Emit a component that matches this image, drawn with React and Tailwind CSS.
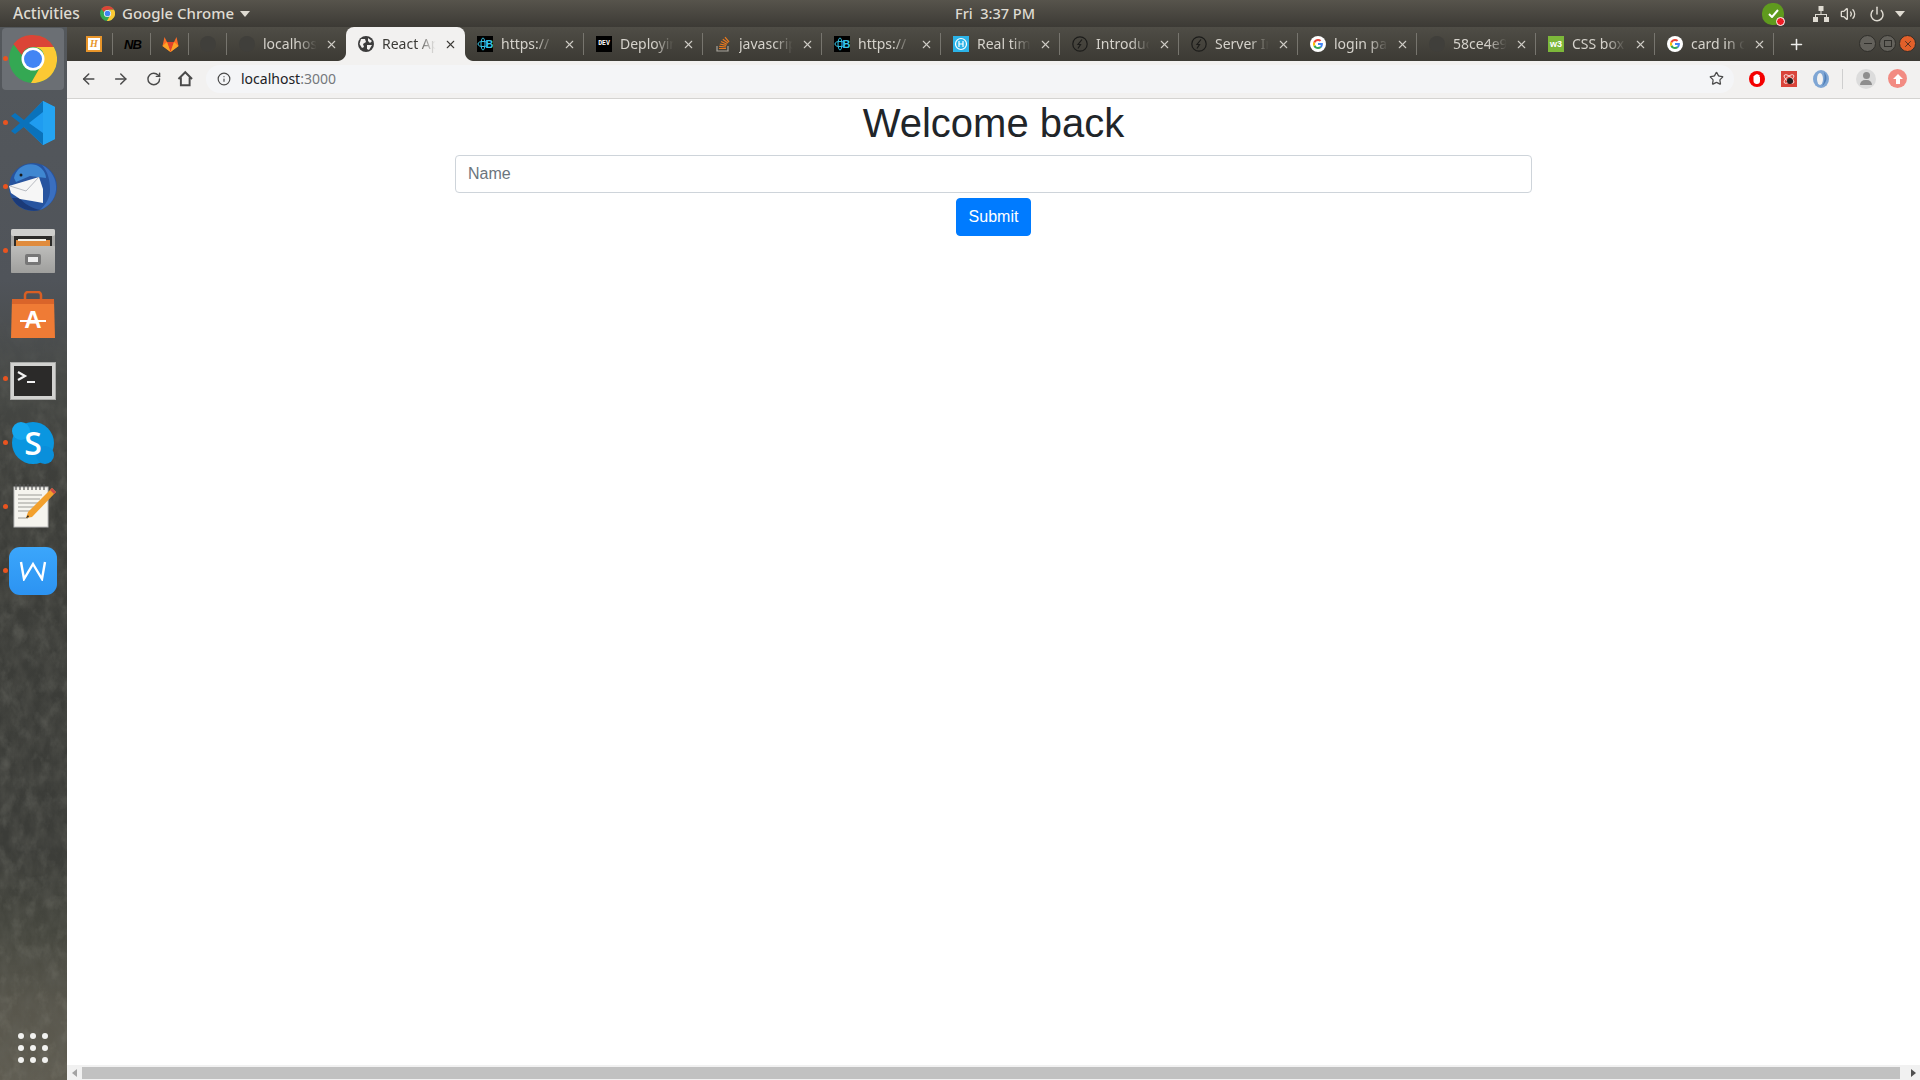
import { ArrowLeft, ArrowRight, RotateCw, Info, Star, X, Plus, Volume2, Power } from 'lucide-react';

const SANS = 'font-["Noto_Sans",sans-serif]';

function ChromeIcon({ size = 48 }) {
  return (
    <svg width={size} height={size} viewBox="0 0 48 48">
      <circle cx="24" cy="24" r="24" fill="#34a853" />
      <path d="M24 0a24 24 0 0 1 20.8 12H24a12 12 0 0 0-11.3 7.9L4.4 8.9A24 24 0 0 1 24 0z" fill="#db4437" />
      <path d="M44.8 12A24 24 0 0 1 22 48l10.4-17.9A12 12 0 0 0 33 15.5 12 12 0 0 0 24 12z" fill="#fcc934" />
      <circle cx="24" cy="24" r="11.5" fill="#fff" />
      <circle cx="24" cy="24" r="9" fill="#4285f4" />
    </svg>
  );
}

function VsCodeIcon() {
  return (
    <svg width="46" height="46" viewBox="0 0 46 46">
      <path d="M33 1 L45 7 V39 L33 45 L11 24 Z" fill="#1f9cf0" />
      <path d="M33 1 L14 20 L5 13 L1 16 L10 23 L1 31 L5 34 L14 27 L33 45 L33 33 L19 23 L33 12 Z" fill="#0a72bb" />
      <path d="M33 1 L45 7 V39 L33 45 Z" fill="#24a4f2" />
    </svg>
  );
}

function ThunderbirdIcon() {
  return (
    <svg width="50" height="50" viewBox="0 0 50 50">
      <circle cx="25" cy="25" r="24" fill="#27549f" />
      <path d="M4 36 C10 48 24 50 32 48 C24 46 16 42 12 36 Z" fill="#1b3a78" />
      <path d="M34 3 C44 8 49 18 48 28 C47 38 40 45 32 48 C38 42 42 36 42 28 C42 18 40 10 34 3 Z" fill="#3a6fc0" />
      <path d="M6 16 C8 6 18 0 28 3 C34 5 38 11 38 16 L22 14 L8 20 Z" fill="#3f87d1" />
      <circle cx="13" cy="13" r="1.500" fill="#1a1a1a" />
      <path d="M1 24 L31 15 L35 27 L35 41 L24 39 L12 37 L3 31 Z" fill="#f6f6f6" />
      <path d="M2 24 L18 29 L31 15" fill="none" stroke="#b9bcc2" strokeWidth="1" />
    </svg>
  );
}

function FilesIcon() {
  return (
    <svg width="46" height="46" viewBox="0 0 46 46">
      <defs>
        <linearGradient id="files-front" x1="0" y1="0" x2="0" y2="1">
          <stop offset="0" stopColor="#bdbdbb" />
          <stop offset="1" stopColor="#9f9f9d" />
        </linearGradient>
      </defs>
      <rect x="1" y="1" width="44" height="44" rx="2" fill="#a8a8a6" />
      <rect x="1" y="1" width="44" height="7" rx="2" fill="#cfcfcd" />
      <rect x="4" y="8" width="38" height="11" fill="#2c2b29" />
      <rect x="6" y="12" width="34" height="8" fill="#e08b3c" />
      <rect x="8" y="11" width="28" height="2" fill="#f2efe6" />
      <rect x="1" y="18" width="44" height="27" rx="1" fill="url(#files-front)" />
      <rect x="15" y="26" width="16" height="11" rx="2" fill="#777" />
      <rect x="18" y="29" width="10" height="5" fill="#eee" />
    </svg>
  );
}

function StoreIcon() {
  return (
    <svg width="44" height="48" viewBox="0 0 44 48">
      <path d="M14 10 V4 a3 3 0 0 1 3-3 h10 a3 3 0 0 1 3 3 V10" fill="none" stroke="#d95f24" strokeWidth="2.500" />
      <path d="M1 8 H43 L44 47 H0 Z" fill="#ef7b35" />
      <path d="M1 8 H43 V13 H1 Z" fill="#d9642a" />
      <text x="22" y="37" textAnchor="middle" fontSize="24" fontWeight="700" fill="#fff" fontFamily="Liberation Sans, sans-serif">A</text>
      <rect x="9" y="29" width="26" height="2" fill="#fff" />
    </svg>
  );
}

function TerminalIcon() {
  return (
    <svg width="46" height="38" viewBox="0 0 46 38">
      <rect x="0.500" y="0.500" width="45" height="37" fill="#d2d2d0" stroke="#a9a9a7" />
      <rect x="4" y="4" width="38" height="30" fill="#2b2a29" />
      <path d="M8 10 L15 14 L8 18" fill="none" stroke="#f2f2f2" strokeWidth="2.200" />
      <rect x="17" y="19" width="8" height="2" fill="#f2f2f2" />
    </svg>
  );
}

function SkypeIcon() {
  return (
    <div className='relative flex items-center justify-center w-[42px] h-[42px] rounded-[21px] bg-[#0a96e0] text-white font-["Open_Sans",sans-serif] font-semibold text-[32px] leading-none'>
      <div className="absolute left-0 top-0 w-[18px] h-[18px] rounded-full bg-[#14a6ee]" />
      <div className="absolute right-0 bottom-0 w-[18px] h-[18px] rounded-full bg-[#0a8fdb]" />
      <span className="relative">S</span>
    </div>
  );
}

function GeditIcon() {
  return (
    <svg width="46" height="46" viewBox="0 0 46 46">
      <rect x="2" y="5" width="34" height="40" fill="#f5f4ee" stroke="#bbb" strokeWidth="1" />
      <path d="M4 2v6M8 2v6M12 2v6M16 2v6M20 2v6M24 2v6M28 2v6M32 2v6" stroke="#555" strokeWidth="1.200" />
      <path d="M6 13h24M6 17h22M6 21h25M6 25h18M6 29h14M6 36h10" stroke="#9b9b96" strokeWidth="1" />
      <path d="M40 6 L44 10 L20 35 L14 36 L16 30 Z" fill="#f2a02c" />
      <path d="M40 6 L44 10 L42 12 L38 8 Z" fill="#cf4a4a" />
      <path d="M14 36 L16 33 L17 35 Z" fill="#222" />
    </svg>
  );
}

function WpsIcon() {
  return (
    <div className="flex items-center justify-center w-12 h-12 rounded-[11px] bg-gradient-to-b from-[#3ba6fb] to-[#2c93f2]">
      <svg width="28" height="20" viewBox="0 0 28 20">
        <path d="M2 1 L5 18 L14 3 L23 18 L26 1" fill="none" stroke="#fff" strokeWidth="2.400" />
      </svg>
    </div>
  );
}

const DOCK = [
  { key: 'chrome', icon: <ChromeIcon />, active: true, dot: true },
  { key: 'code', icon: <VsCodeIcon />, dot: true },
  { key: 'thunderbird', icon: <ThunderbirdIcon />, dot: true },
  { key: 'files', icon: <FilesIcon />, dot: true },
  { key: 'store', icon: <StoreIcon /> },
  { key: 'terminal', icon: <TerminalIcon />, dot: true, shift: 'mt-[4px]' },
  { key: 'skype', icon: <SkypeIcon />, dot: true },
  { key: 'gedit', icon: <GeditIcon />, dot: true, shift: 'mb-[4px] ml-[4px]' },
  { key: 'wps', icon: <WpsIcon />, dot: true },
];

function DarkGlobe() {
  return <div className="w-4 h-4 rounded-full bg-[#403f3b]" />;
}

function WhiteGlobe() {
  return (
    <svg width="16" height="16" viewBox="0 0 16 16">
      <circle cx="8" cy="8" r="8" fill="#3c3c3c" />
      <path d="M3 3 L7 3 L8 6 L5 8 L6 11 L4 12 L1.500 8 Z M10 2 L14 5 L12 7 L10 5 Z M9 9 L14 9 L11 14 L9 13 Z" fill="#f2f1f0" />
    </svg>
  );
}

function AtomIcon() {
  return (
    <svg width="16" height="16" viewBox="0 0 16 16">
      <rect width="16" height="16" fill="#000" />
      <g fill="none" stroke="#35c6e8" strokeWidth="1">
        <ellipse cx="6" cy="8" rx="2" ry="6" />
        <ellipse cx="6" cy="8" rx="5" ry="2.500" />
      </g>
      <text x="8.500" y="12" fontSize="11" fontWeight="700" fill="#35c6e8" fontFamily="Liberation Sans, sans-serif">B</text>
    </svg>
  );
}

function DevIcon() {
  return (
    <div className='flex items-center justify-center w-4 h-4 bg-black text-white text-[6.500px] font-bold leading-none font-["Liberation_Mono",monospace]'>
      DEV
    </div>
  );
}

function StackIcon() {
  return (
    <svg width="16" height="16" viewBox="0 0 16 16" fill="none">
      <path d="M2 10 V15 H13 V10" stroke="#a8a49c" strokeWidth="1.200" />
      <path d="M4 12.500 H11 M4.200 10.300 L11 11 M4.800 8 L11.300 9.400 M6 5.500 L12 8.200 M7.800 3.200 L13 7 M10 1.200 L14 6" stroke="#e8791f" strokeWidth="1.200" />
    </svg>
  );
}

function HashIcon() {
  return (
    <svg width="16" height="16" viewBox="0 0 16 16">
      <rect width="16" height="16" fill="#2bb3e8" />
      <circle cx="8" cy="8" r="5.500" fill="none" stroke="#fff" strokeWidth="1.200" />
      <path d="M6 5 V11 M10 5 V11 M6 8 H10" stroke="#fff" strokeWidth="1.200" />
    </svg>
  );
}

function BoltIcon() {
  return (
    <svg width="16" height="16" viewBox="0 0 16 16" fill="none">
      <circle cx="8" cy="8" r="7.200" stroke="#1c1c1a" strokeWidth="1.200" />
      <path d="M10 3.500 L6 8.500 H8.500 L6 12.500" stroke="#1c1c1a" strokeWidth="1.200" />
    </svg>
  );
}

function GoogleIcon() {
  return (
    <svg width="16" height="16" viewBox="0 0 16 16">
      <circle cx="8" cy="8" r="8" fill="#fff" />
      <path d="M12.900 8.100c0-.4 0-.7-.1-1H8v1.900h2.800c-.1.7-.5 1.200-1 1.600l1.600 1.200c.9-.9 1.500-2.200 1.500-3.700z" fill="#4285f4" />
      <path d="M8 13c1.300 0 2.500-.4 3.400-1.200L9.800 10.600c-.5.3-1.100.5-1.800.5-1.300 0-2.400-.9-2.800-2.100L3.500 10.200C4.300 11.900 6 13 8 13z" fill="#34a853" />
      <path d="M5.200 9c-.2-.6-.2-1.300 0-1.900L3.500 5.800c-.7 1.400-.7 3 0 4.400z" fill="#fbbc05" />
      <path d="M8 4.900c.7 0 1.400.3 1.900.7l1.400-1.400C10.400 3.400 9.300 3 8 3 6 3 4.300 4.100 3.500 5.800l1.700 1.300C5.600 5.800 6.700 4.900 8 4.900z" fill="#ea4335" />
    </svg>
  );
}

function W3Icon() {
  return (
    <div className='flex items-center justify-center w-4 h-4 bg-[#7db83a] text-white text-[9px] font-bold leading-none font-["Liberation_Sans",sans-serif]'>
      w3
    </div>
  );
}

function HIcon() {
  return (
    <div className='flex items-center justify-center w-4 h-4 bg-white border-2 border-[#e8952a] text-[#e8952a] text-[10px] font-bold italic leading-none font-["Liberation_Serif",serif]'>
      H
    </div>
  );
}

function NbIcon() {
  return <div className='w-4 text-center text-black text-[13px] font-bold italic leading-none tracking-[-1px] font-["Liberation_Sans",sans-serif]'>NB</div>;
}

function GitlabIcon() {
  return (
    <svg width="17" height="16" viewBox="0 0 17 16">
      <path d="M8.500 16 L0.500 10 L2.500 1 L5 6 H12 L14.500 1 L16.500 10 Z" fill="#fc6d26" />
      <path d="M8.500 16 L5 6 H12 Z" fill="#e24329" />
      <path d="M0.500 10 L5 6 L8.500 16 Z M16.500 10 L12 6 L8.500 16 Z" fill="#fca326" />
    </svg>
  );
}

const PINNED = [
  { key: 'h', icon: <HIcon /> },
  { key: 'nb', icon: <NbIcon /> },
  { key: 'gitlab', icon: <GitlabIcon /> },
  { key: 'globe', icon: <DarkGlobe /> },
];

const TABS = [
  { id: 1, title: 'localhost', icon: <DarkGlobe />, noSep: true },
  { id: 2, title: 'React App', icon: <WhiteGlobe />, active: true },
  { id: 3, title: 'https://', icon: <AtomIcon /> },
  { id: 4, title: 'Deploying', icon: <DevIcon /> },
  { id: 5, title: 'javascript', icon: <StackIcon /> },
  { id: 6, title: 'https://', icon: <AtomIcon /> },
  { id: 7, title: 'Real time', icon: <HashIcon /> },
  { id: 8, title: 'Introducing', icon: <BoltIcon /> },
  { id: 9, title: 'Server In', icon: <BoltIcon /> },
  { id: 10, title: 'login page', icon: <GoogleIcon /> },
  { id: 11, title: '58ce4e9f', icon: <DarkGlobe /> },
  { id: 12, title: 'CSS box', icon: <W3Icon /> },
  { id: 13, title: 'card in css', icon: <GoogleIcon /> },
];

function Tab({ tab }) {
  return (
    <div
      className={`relative flex items-center w-[119px] h-[34px] pl-3 shrink-0 ${
        tab.active ? 'bg-[#f2f1f0] rounded-t-lg text-[#3c3b37]' : 'text-[#d5d2cb]'
      }`}
    >
      {tab.active && (
        <>
          <svg className="absolute left-[-8px] bottom-0" width="8" height="8" viewBox="0 0 8 8">
            <path d="M8 0 V8 H0 C4 8 8 4 8 0 Z" fill="#f2f1f0" />
          </svg>
          <svg className="absolute right-[-8px] bottom-0" width="8" height="8" viewBox="0 0 8 8">
            <path d="M0 0 V8 H8 C4 8 0 4 0 0 Z" fill="#f2f1f0" />
          </svg>
        </>
      )}
      <div className="w-4 h-4 flex items-center justify-center shrink-0">{tab.icon}</div>
      <span className="ml-2 w-[56px] overflow-hidden whitespace-nowrap text-[14px] leading-[34px] [mask-image:linear-gradient(to_right,black_62%,transparent_96%)]">
        {tab.title}
      </span>
      <X size={13} strokeWidth={2} className={`ml-[6px] shrink-0 ${tab.active ? 'text-[#3c3b37]' : 'text-[#cfccc5]'}`} />
      {!tab.active && !tab.noSep && <div className="absolute right-0 top-[6px] h-[22px] w-px bg-[#77756e]" />}
    </div>
  );
}

function WindowButton({ children, className }) {
  return (
    <div className={`flex items-center justify-center w-[17px] h-[17px] rounded-full ${className}`}>{children}</div>
  );
}

function TopBar() {
  return (
    <div className={`relative flex items-center h-[27px] shrink-0 bg-gradient-to-b from-[#57544c] to-[#3c3a35] text-[#dfdbd2] text-[15px] font-medium ${SANS}`}>
      <span className="ml-[13px] w-[87px] text-[15.500px]">Activities</span>
      <ChromeIcon size={15} />
      <span className="ml-[7px]">Google Chrome</span>
      <svg className="ml-[6px]" width="10" height="6" viewBox="0 0 10 6"><path d="M0 0 H10 L5 6 Z" fill="#dfdbd2" /></svg>
      {/* clock is centered on the whole bar */}
      <span className="absolute left-[955px] top-[3px] whitespace-pre text-[14.500px]">Fri  3:37 PM</span>
      <div className="ml-auto flex items-center mr-[15px]">
        <div className="relative flex items-center justify-center w-[22px] h-[22px] rounded-[10px] bg-[#5f9a1e] mr-[29px]">
          <svg width="11" height="9" viewBox="0 0 11 9"><path d="M1 5 L4 8 L10 1" fill="none" stroke="#fff" strokeWidth="2" /></svg>
          <div className="absolute right-[-1px] bottom-[-1px] w-[9px] h-[9px] rounded-full bg-[#ee1c25] border border-white" />
        </div>
        <svg className="mr-[11px]" width="16" height="16" viewBox="0 0 16 16" fill="#dfdbd2">
          <rect x="5.500" y="0" width="5" height="5" />
          <rect x="0" y="11" width="5" height="5" />
          <rect x="11" y="11" width="5" height="5" />
          <path d="M7.500 5h1v3h5.500v3h-1V9H3v2H2V8h5.500z" />
        </svg>
        <Volume2 size={16} className="mr-[13px] text-[#dfdbd2]" />
        <Power size={16} strokeWidth={2.200} className="mr-[10px] text-[#dfdbd2]" />
        <svg width="10" height="6" viewBox="0 0 10 6"><path d="M0 0 H10 L5 6 Z" fill="#dfdbd2" /></svg>
      </div>
    </div>
  );
}

function TabBar() {
  return (
    <div className={`flex items-end h-[34px] shrink-0 pl-2 bg-gradient-to-b from-[#4f4d46] to-[#3c3a34] ${SANS}`}>
      {PINNED.map((p) => (
        <div key={p.key} className="relative flex items-center justify-center w-[38px] h-[34px] shrink-0">
          {p.icon}
          <div className="absolute right-0 top-[6px] h-[22px] w-px bg-[#77756e]" />
        </div>
      ))}
      {TABS.map((t) => <Tab key={t.id} tab={t} />)}
      <Plus size={17} strokeWidth={2.200} className="ml-[14px] mb-[8px] text-[#eeeeec]" />
      <div className="ml-auto mr-[4px] mb-[9px] flex items-center gap-[3px]">
        <WindowButton className="bg-[#63615b] border border-[#2f2e2a]"><div className="w-2 h-px bg-[#2f2e2a]" /></WindowButton>
        <WindowButton className="bg-[#63615b] border border-[#2f2e2a]"><div className="w-2 h-[7px] border border-[#2f2e2a]" /></WindowButton>
        <WindowButton className="bg-[#e2602a] border border-[#2f2e2a]"><X size={10} strokeWidth={2} className="text-[#3b2a20]" /></WindowButton>
      </div>
    </div>
  );
}

function Toolbar() {
  return (
    <div className={`flex items-center h-[38px] shrink-0 pl-[13px] pr-[13px] pb-[2px] bg-[#f2f1f0] border-b border-[#d4d3d1] text-[#4a4a4a] ${SANS}`}>
      <ArrowLeft size={18} strokeWidth={2} className="mr-[15px]" />
      <ArrowRight size={18} strokeWidth={2} className="mr-[15px]" />
      <RotateCw size={16} strokeWidth={2.200} className="mr-[15px] ml-px" />
      <svg className="mr-[13px]" width="17" height="17" viewBox="0 0 17 17" fill="none" stroke="#4a4a4a" strokeWidth="2">
        <path d="M1.500 9 L8.500 2 L15.500 9 M4 7.500 V15.500 H13 V7.500" />
      </svg>
      <div className="flex items-center h-[28px] w-[1528px] rounded-full bg-[#f4f5f7] pl-[11px] shrink-0">
        <Info size={14} strokeWidth={2} />
        <span className="ml-[10px] text-[14px] text-[#202124]">localhost<span className="text-[#75787c]">:3000</span></span>
        <Star size={15} strokeWidth={2} className="ml-auto mr-[10px] text-[#4a4a4a]" />
      </div>
      <svg className="ml-[15px] shrink-0" width="16" height="16" viewBox="0 0 16 16">
        <circle cx="8" cy="8" r="8" fill="#f40000" />
        <path d="M4.500 8 V5 h1 V4 h1 V3.500 h1 V3 h1 V3.500 h1 V4 h1 V6 h.5 V10 a3 3 0 0 1-3 3 H8 a3 3 0 0 1-3.500-3z" fill="#fff" />
      </svg>
      <svg className="ml-4 shrink-0" width="16" height="16" viewBox="0 0 16 16">
        <rect width="16" height="16" fill="#d9443a" />
        <g fill="none" stroke="#fff" strokeWidth="0.800">
          <ellipse cx="8" cy="8" rx="6" ry="2.500" transform="rotate(40 8 8)" />
          <ellipse cx="8" cy="8" rx="6" ry="2.500" transform="rotate(-40 8 8)" />
        </g>
        <circle cx="9" cy="10" r="3" fill="#222" />
      </svg>
      <svg className="ml-4 shrink-0" width="16" height="18" viewBox="0 0 16 18">
        <ellipse cx="8" cy="9" rx="8" ry="9" fill="#7fa6d4" />
        <ellipse cx="7" cy="9" rx="3" ry="6" fill="#f2f1f0" />
        <path d="M11 2 C15 6 14 13 9 16 C12 12 12 6 11 2 Z" fill="#4f7fb8" />
      </svg>
      <div className="ml-[13px] w-px h-5 bg-[#cfcfcf] shrink-0" />
      <div className="ml-[13px] relative w-[20px] h-[20px] rounded-full bg-[#dcdcdc] flex flex-col items-center justify-center shrink-0">
        <div className="w-[7px] h-[7px] rounded-full bg-[#8e8e8e]" />
        <div className="mt-px w-[12px] h-[5px] rounded-t-full bg-[#8e8e8e]" />
      </div>
      <div className="ml-[12px] w-[19px] h-[19px] rounded-full bg-[#f28b82] flex items-center justify-center shrink-0">
        <svg width="10" height="10" viewBox="0 0 10 10"><path d="M5 0 L10 5 H7 V10 H3 V5 H0 Z" fill="#fff" /></svg>
      </div>
    </div>
  );
}

function Dock() {
  return (
    <div className="relative flex flex-col w-[67px] shrink-0 bg-[linear-gradient(to_bottom,#54585c_0%,#50545a_24%,#464845_34%,#3c3d39_44%,#3b3c38_78%,#46473f_86%,#58564c_93%,#5f5c51_100%)]">
      {/* rocky wallpaper showing through the dock */}
      <svg className="absolute inset-0 w-full h-full opacity-40 [mask-image:linear-gradient(to_bottom,transparent_26%,black_42%)]">
        <filter id="rock">
          <feTurbulence type="fractalNoise" baseFrequency="0.09 0.05" numOctaves="4" seed="8" />
          <feColorMatrix values="0 0 0 0 0.14  0 0 0 0 0.14  0 0 0 0 0.12  1.4 0 0 0 -0.4" />
        </filter>
        <filter id="rock-light">
          <feTurbulence type="fractalNoise" baseFrequency="0.08 0.06" numOctaves="4" seed="21" />
          <feColorMatrix values="0 0 0 0 0.38  0 0 0 0 0.38  0 0 0 0 0.33  1.2 0 0 0 -0.6" />
        </filter>
        <rect width="100%" height="100%" filter="url(#rock)" />
        <rect width="100%" height="100%" filter="url(#rock-light)" />
      </svg>
      {DOCK.map((d) => (
        <div key={d.key} className="relative flex items-center justify-center h-16 shrink-0 pr-px">
          {d.active && <div className="absolute left-[2px] right-[3px] top-px bottom-px rounded-[4px] bg-[#6b6f74]" />}
          {d.dot && <div className="absolute left-[3px] top-[29px] w-[5px] h-[5px] rounded-full bg-[#e95420]" />}
          <div className={`relative ${d.shift || ''}`}>{d.icon}</div>
        </div>
      ))}
      <div className="relative mt-auto mb-[17px] ml-[18px] grid grid-cols-3 gap-[6px] w-[30px]">
        {Array.from({ length: 9 }).map((_, i) => (
          <div key={i} className="w-[6px] h-[6px] rounded-full bg-[#f2f2f0]" />
        ))}
      </div>
    </div>
  );
}

function Scrollbar() {
  return (
    <div className="flex items-center h-[15px] shrink-0 bg-[#f1f1f1]">
      <svg className="ml-[5px] mr-[5px]" width="5" height="8" viewBox="0 0 5 8"><path d="M5 0 V8 L0 4 Z" fill="#a3a3a3" /></svg>
      <div className="flex-1 h-[12px] bg-[#c1c1c1]" />
      <svg className="ml-[11px] mr-[4px]" width="5" height="8" viewBox="0 0 5 8"><path d="M0 0 V8 L5 4 Z" fill="#505050" /></svg>
    </div>
  );
}

export default function App() {
  return (
    <div className="flex flex-col w-[1920px] h-[1080px] overflow-hidden bg-white">
      <TopBar />
      <div className="flex flex-1 min-h-0">
        <Dock />
        <div className="flex flex-col flex-1 min-w-0">
          <TabBar />
          <Toolbar />
          <main className='flex-1 flex flex-col items-center font-["Liberation_Sans",sans-serif] text-[#212529]'>
            <h1 className="text-[40px] leading-[48px] mb-2 font-medium">Welcome back</h1>
            <input
              placeholder="Name"
              className="w-[1077px] h-[38px] px-3 rounded border border-[#ced4da] text-base placeholder:text-[#6c757d] bg-white"
            />
            <button className="mt-[5px] h-[38px] px-3 rounded bg-[#007bff] border border-[#007bff] text-white text-base">
              Submit
            </button>
          </main>
          <Scrollbar />
        </div>
      </div>
    </div>
  );
}
